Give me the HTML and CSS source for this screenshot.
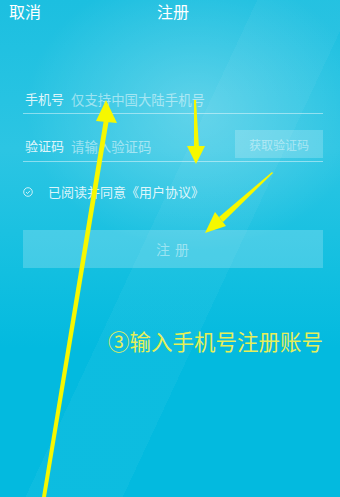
FILE: index.html
```html
<!DOCTYPE html>
<html lang="zh-CN">
<head>
  <meta charset="UTF-8" />
  <meta name="viewport" content="width=device-width, initial-scale=1.0"/>
  <title>注册</title>
  <link rel="stylesheet" href="styles.css">
</head>
<body>
  <div class="screen">
    <!-- Top bar -->
    <div class="topbar">
      <span class="cancel">取消</span>
      <span class="title">注册</span>
      <span></span>
    </div>

    <!-- Form -->
    <div class="form">
      <div class="field">
        <span class="label">手机号</span>
        <span class="placeholder">仅支持中国大陆手机号</span>
      </div>
      <div class="field code">
        <span class="label">验证码</span>
        <span class="placeholder">请输入验证码</span>
        <button class="code-btn">获取验证码</button>
      </div>
      <div class="agree">
        <span class="check">
          <svg width="10" height="10" viewBox="0 0 10 10">
            <circle cx="5" cy="5" r="4.3" fill="none" stroke="rgba(255,255,255,0.85)" stroke-width="0.9"/>
            <path d="M3 5.1 L4.5 6.5 L7 3.8" fill="none" stroke="rgba(255,255,255,0.85)" stroke-width="0.9"/>
          </svg>
        </span>
        <span>已阅读并同意《用户协议》</span>
      </div>
      <button class="submit">注 册</button>
    </div>

    <p class="note">③输入手机号注册账号</p>

    <!-- Annotation arrows -->
    <svg class="arrows" width="340" height="497" viewBox="0 0 340 497">
      <polygon fill="#f6f800" points="42,497 46,497 109,119 104,119"/>
      <polygon fill="#f6f800" points="96,121 106,100 117,123"/>
      <polygon fill="#f6f800" points="194,100 196,100 199,148 194,148"/>
      <polygon fill="#f6f800" points="187,146 205,146 196,164"/>
      <polygon fill="#f6f800" points="272,172 273,173 223,222 219,217"/>
      <polygon fill="#f6f800" points="226,226 215,212 205,233"/>
    </svg>
  </div>
</body>
</html>
```

FILE: styles.css
```css
body {
  margin: 0;
  font-family: "Noto Sans CJK SC", "Noto Sans", sans-serif;
  background: #04badf;
}

.screen {
  position: relative;
  width: 340px;
  height: 497px;
  overflow: hidden;
  color: #fff;
  background:
    radial-gradient(ellipse 170px 140px at 195px 110px, rgba(255, 255, 255, 0.26), rgba(255, 255, 255, 0) 100%),
    linear-gradient(115deg, rgba(255, 255, 255, 0) 45%, rgba(255, 255, 255, 0.04) 45%, rgba(255, 255, 255, 0.04) 62%, rgba(255, 255, 255, 0) 62%),
    linear-gradient(180deg, #1cbfe0 0%, #2cc5e3 30%, #12bfe0 55%, #03badf 70%, #03badf 100%);
}

.topbar {
  display: grid;
  grid-template-columns: 1fr auto 1fr;
  align-items: center;
  height: 22px;
  padding: 0 9px;
  font-size: 16px;
  line-height: 22px;
}

.title {
  padding-left: 6px;
}

.form {
  padding: 0 17px 0 23px;
}

.field {
  display: flex;
  align-items: flex-end;
  height: 29px;
  margin-top: 56px;
  padding-bottom: 6px;
  border-bottom: 1px solid rgba(255, 255, 255, 0.45);
  font-size: 13px;
  line-height: 16px;
}

.field.code {
  height: 44px;
  margin-top: 0;
  padding-bottom: 3px;
}

.label {
  color: rgba(255, 255, 255, 0.85);
  margin-left: 2px;
}

.field.code .label,
.field.code .placeholder {
  margin-bottom: 4px;
}

.placeholder {
  margin-left: 7px;
  color: rgba(255, 255, 255, 0.5);
  font-size: 13.4px;
}

.code-btn {
  margin-left: auto;
  width: 88px;
  height: 28px;
  border: none;
  padding: 0;
  background: rgba(255, 255, 255, 0.2);
  color: rgba(255, 255, 255, 0.45);
  font-family: inherit;
  font-size: 12px;
}

.agree {
  display: flex;
  align-items: center;
  margin-top: 22px;
  font-size: 13px;
  line-height: 16px;
  color: rgba(255, 255, 255, 0.85);
}

.check {
  display: flex;
  margin-right: 15px;
}

.submit {
  display: block;
  width: 100%;
  height: 38px;
  margin-top: 30px;
  border: none;
  background: rgba(255, 255, 255, 0.2);
  color: rgba(255, 255, 255, 0.45);
  font-family: inherit;
  font-size: 14px;
  letter-spacing: 1px;
}

.note {
  margin: 59px 17px 0 0;
  text-align: right;
  font-size: 21.5px;
  line-height: 28px;
  color: #e6ef58;
}

.arrows {
  position: absolute;
  left: 0;
  top: 0;
  pointer-events: none;
}
```
